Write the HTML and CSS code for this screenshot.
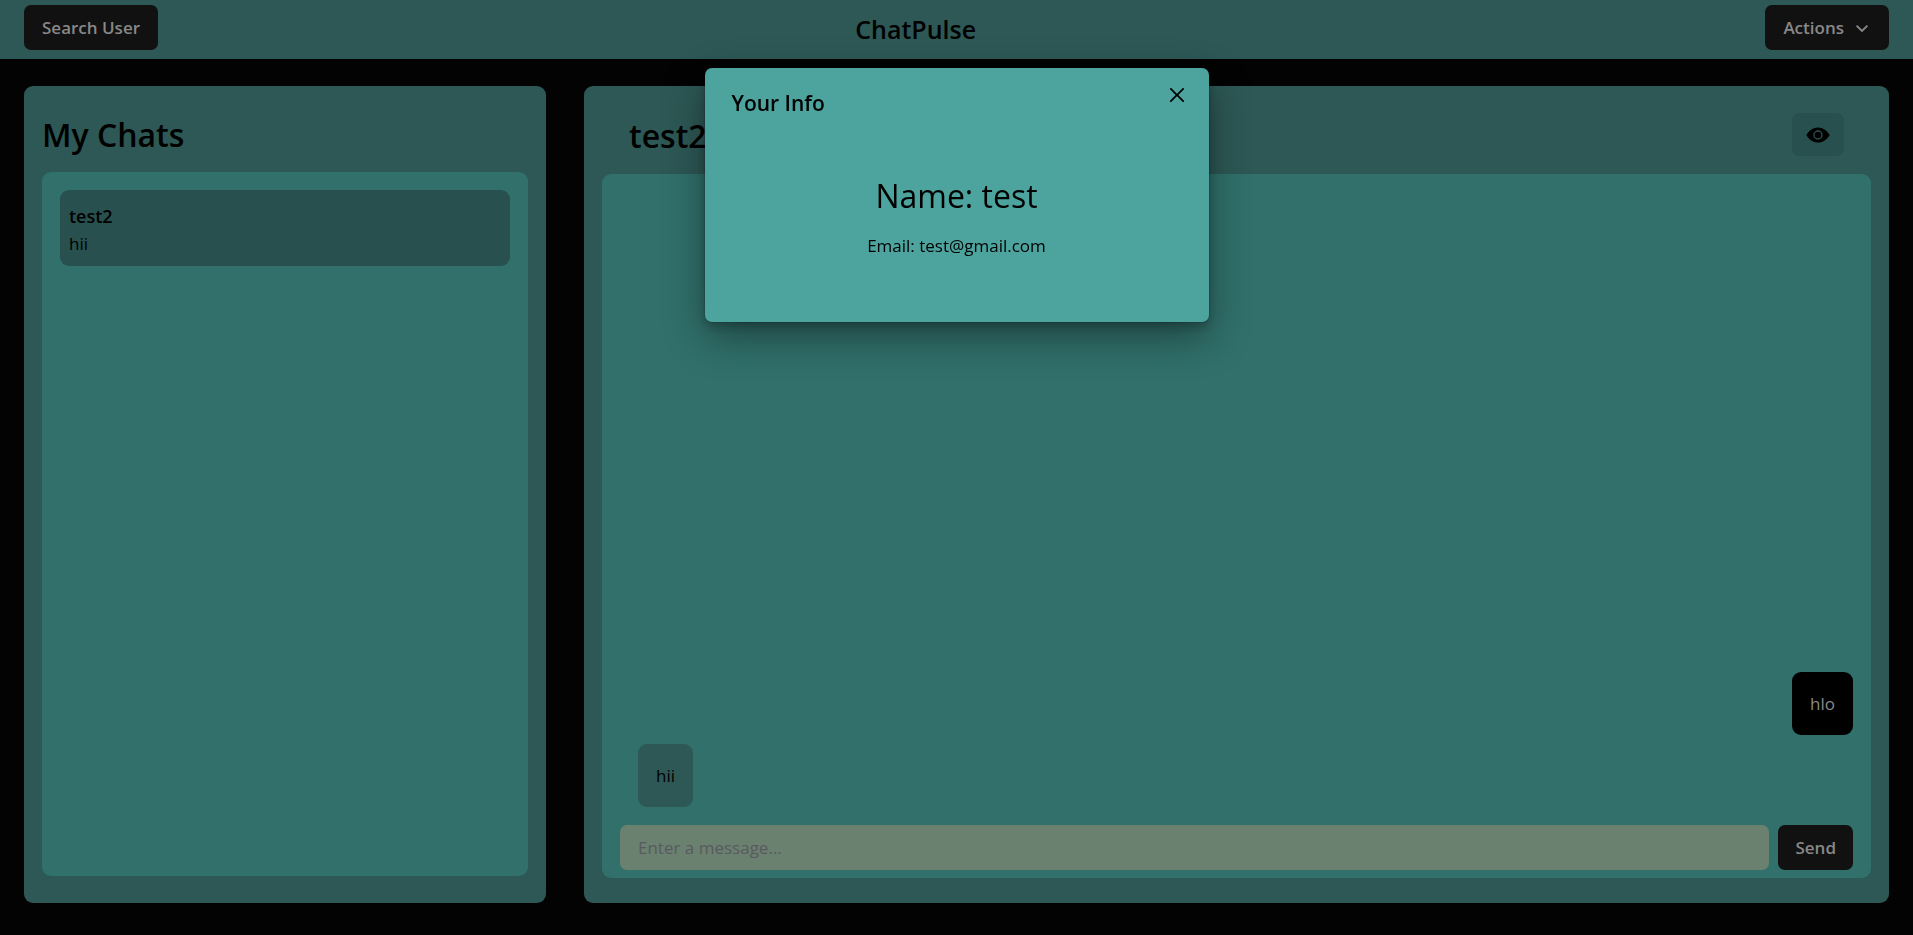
FILE: index.html
```html
<!DOCTYPE html>
<html lang="en">
<head>
<meta charset="utf-8">
<meta name="viewport" content="width=device-width, initial-scale=1">
<title>ChatPulse</title>
<link rel="stylesheet" href="styles.css">
</head>
<body>
<header class="topbar">
  <button class="btn" type="button">Search User</button>
  <h1 class="brand">ChatPulse</h1>
  <button class="btn" type="button">Actions
    <svg class="chevron" viewBox="0 0 18 18" aria-hidden="true"><path fill="none" stroke="currentColor" stroke-width="1.9" d="M3.6 6.6 9 12l5.400-5.400"/></svg>
  </button>
</header>

<main class="layout">
  <section class="panel chats">
    <h2 class="chats-title">My Chats</h2>
    <div class="surface chat-list">
      <button class="chat-item" type="button">
        <span class="chat-name">test2</span>
        <span class="chat-preview">hii</span>
      </button>
    </div>
  </section>

  <section class="panel conversation">
    <div class="conversation-head">
      <h2 class="conversation-title">test2</h2>
      <button class="icon-btn" type="button" aria-label="View profile">
        <svg class="eye" viewBox="0 0 24 24" aria-hidden="true"><path fill="currentColor" fill-rule="evenodd" d="M.3 12C3.200 7.200 7.200 4.400 12 4.400S20.800 7.200 23.700 12C20.800 16.800 16.800 19.600 12 19.600S3.200 16.800.3 12ZM7.300 12a4.700 4.700 0 1 0 9.400 0 4.700 4.700 0 0 0-9.400 0Z"/><circle fill="currentColor" cx="12" cy="12" r="3.300"/></svg>
      </button>
    </div>
    <div class="surface thread">
      <div class="messages">
        <p class="bubble bubble-own">hlo</p>
        <p class="bubble">hii</p>
      </div>
      <form class="composer">
        <input class="field" type="text" placeholder="Enter a message..." aria-label="Message">
        <button class="btn btn-send" type="button">Send</button>
      </form>
    </div>
  </section>
</main>

<div class="overlay">
  <section class="modal" role="dialog" aria-modal="true" aria-labelledby="modal-title">
    <header class="modal-head">
      <h2 class="modal-title" id="modal-title">Your Info</h2>
      <button class="close" type="button" aria-label="Close">
        <svg class="cross" viewBox="0 0 24 24" aria-hidden="true"><path fill="currentColor" d="M.439,21.44a1.5,1.5,0,0,0,2.122,2.121L11.823,14.3a.25.25,0,0,1,.354,0l9.262,9.263a1.5,1.5,0,1,0,2.122-2.121L14.3,12.177a.25.25,0,0,1,0-.354l9.263-9.262A1.5,1.5,0,0,0,21.439.44L12.177,9.7a.25.25,0,0,1-.354,0L2.561.44A1.5,1.5,0,0,0,.439,2.561L9.7,11.823a.25.25,0,0,1,0,.354Z"/></svg>
      </button>
    </header>
    <div class="modal-body">
      <p class="info-name">Name: test</p>
      <p class="info-email">Email: test@gmail.com</p>
    </div>
  </section>
</div>
</body>
</html>
```

FILE: styles.css
```css
:root {
  --bar: #2d5855;
  --surface: #31706b;
  --item: #28504f;
  --dark: #111111;
  --light: #888888;
}

*, *::before, *::after { box-sizing: border-box; }

body {
  margin: 0;
  min-height: 100vh;
  display: flex;
  flex-direction: column;
  background: #030303;
  color: #000000;
  font-family: "Open Sans", "Noto Sans", sans-serif;
  font-size: 17px;
  line-height: 27px;
}

h1, h2, p { margin: 0; }

button, input { font: inherit; color: inherit; border: 0; }

.topbar {
  display: flex;
  justify-content: space-between;
  align-items: center;
  padding: 5px 24px 9px;
  background: var(--bar);
}

.brand {
  padding: 2px 92px 0 0;
  font-size: 25px;
  font-weight: 600;
  line-height: 36px;
}

.btn {
  display: inline-flex;
  align-items: center;
  justify-content: center;
  gap: 9px;
  height: 45px;
  padding: 0 18px;
  border-radius: 7px;
  background: var(--dark);
  color: var(--light);
  font-weight: 600;
}

.btn-send { padding: 0 17px; }

.chevron { width: 18px; height: 18px; }

.layout {
  flex: 1;
  display: grid;
  grid-template-columns: 2fr 5fr;
  gap: 38px;
  padding: 27px 24px 32px;
}

.panel {
  display: flex;
  flex-direction: column;
  border-radius: 9px;
  background: var(--bar);
}

.chats { padding: 27px 18px; }

.chats-title {
  padding-bottom: 16px;
  font-size: 32px;
  font-weight: 600;
  line-height: 43px;
}

.surface {
  flex: 1;
  border-radius: 9px;
  background: var(--surface);
}

.chat-list { padding: 18px; }

.chat-item {
  display: flex;
  flex-direction: column;
  width: 100%;
  padding: 13px 9px 9px;
  border-radius: 9px;
  background: var(--item);
  text-align: left;
}

.chat-name {
  font-size: 18px;
  font-weight: 600;
}

.conversation { padding: 27px 18px 25px; }

.conversation-head {
  display: flex;
  justify-content: space-between;
  align-items: flex-start;
  padding: 0 27px 16px;
}

.conversation-title {
  font-size: 32px;
  font-weight: 600;
  line-height: 45px;
}

.icon-btn {
  display: grid;
  place-items: center;
  width: 52px;
  height: 43px;
  border-radius: 7px;
  background: var(--item);
}

.eye { width: 24px; height: 24px; }

.thread {
  display: flex;
  flex-direction: column;
  gap: 18px;
  padding: 18px 18px 8px;
}

.messages {
  flex: 1;
  display: flex;
  flex-direction: column;
  justify-content: flex-end;
  align-items: flex-start;
  gap: 9px;
  padding-left: 18px;
}

.bubble {
  padding: 18px;
  border-radius: 9px;
  background: var(--bar);
}

.bubble-own {
  align-self: flex-end;
  background: #000000;
  color: var(--light);
}

.composer { display: flex; gap: 9px; }

.field {
  flex: 1;
  min-width: 0;
  height: 45px;
  padding: 0 18px;
  border-radius: 7px;
  background: #6a8170;
}

.field::placeholder { color: #59595f; opacity: 1; }

.overlay {
  position: fixed;
  inset: 0;
  display: flex;
  justify-content: center;
  align-items: flex-start;
  padding: 68px 18px;
}

.modal {
  width: 100%;
  max-width: 504px;
  border-radius: 7px;
  background: #4da49e;
  box-shadow:
    0 0 0 1px rgba(0, 0, 0, 0.1),
    0 5px 10px rgba(0, 0, 0, 0.2),
    0 15px 40px rgba(0, 0, 0, 0.4);
}

.modal-head {
  display: flex;
  justify-content: space-between;
  align-items: flex-start;
  padding: 9px 14px 0 27px;
}

.modal-title {
  padding-top: 9px;
  font-size: 21px;
  font-weight: 600;
  line-height: 34px;
}

.close {
  display: grid;
  place-items: center;
  width: 36px;
  height: 36px;
  padding: 0;
  border-radius: 7px;
  background: transparent;
}

.cross { width: 14px; height: 14px; }

.modal-body {
  display: flex;
  flex-direction: column;
  align-items: center;
  gap: 9px;
  padding: 49px 27px 63px;
}

.info-name {
  font-size: 32px;
  line-height: 54px;
}
```
